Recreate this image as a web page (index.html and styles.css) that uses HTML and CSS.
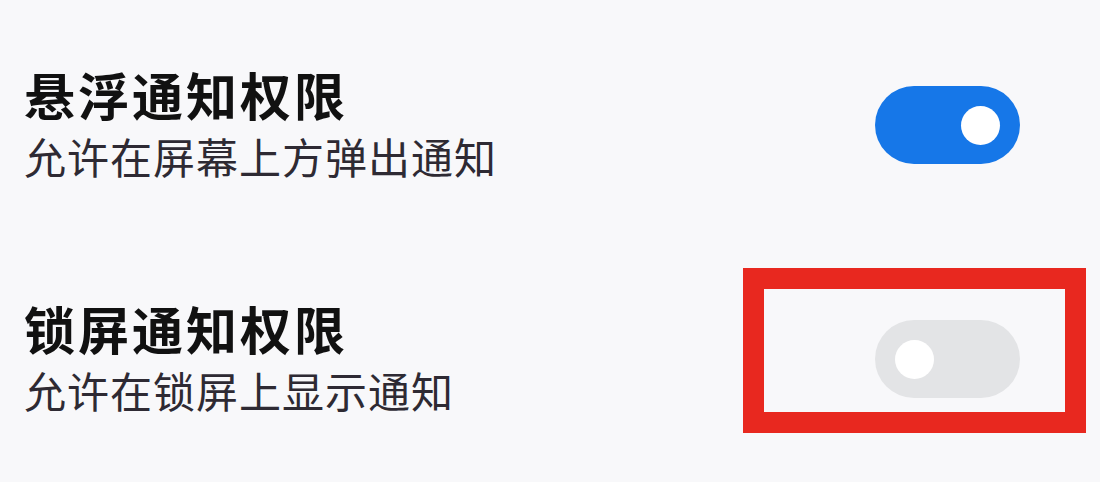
FILE: index.html
```html
<!DOCTYPE html>
<html lang="zh-CN">
<head>
    <meta charset="UTF-8">
    <meta name="viewport" content="width=device-width, initial-scale=1.0">
    <title>通知权限</title>
    <link rel="stylesheet" href="styles.css">
</head>
<body>
    <div class="settings">
        <div class="setting-row">
            <div class="setting-text">
                <div class="setting-title">悬浮通知权限</div>
                <div class="setting-desc">允许在屏幕上方弹出通知</div>
            </div>
            <div class="switch on"><span class="knob"></span></div>
        </div>
        <div class="setting-row">
            <div class="setting-text">
                <div class="setting-title">锁屏通知权限</div>
                <div class="setting-desc">允许在锁屏上显示通知</div>
            </div>
            <div class="switch-wrap">
                <div class="highlight"></div>
                <div class="switch off"><span class="knob"></span></div>
            </div>
        </div>
    </div>
</body>
</html>
```

FILE: styles.css
```css
body {
    margin: 0;
    background-color: #f8f8fa;
    font-family: "Noto Sans CJK SC", "Noto Sans", sans-serif;
    color: #111;
}

.settings {
    padding-top: 8px;
}

.setting-row {
    height: 234px;
    display: flex;
    align-items: center;
    justify-content: space-between;
    padding: 0 80px 0 24px;
}

.setting-text {
    margin-top: -4px;
}

.setting-title {
    font-size: 51px;
    font-weight: bold;
    letter-spacing: 3px;
    line-height: 1.2;
}

.setting-desc {
    margin-top: 6px;
    font-size: 42px;
    letter-spacing: 1px;
    line-height: 1.2;
    color: #2e2a33;
}

.switch {
    width: 145px;
    height: 78px;
    border-radius: 39px;
    display: flex;
    align-items: center;
    box-sizing: border-box;
    padding: 0 20px;
}

.switch .knob {
    width: 39px;
    height: 39px;
    border-radius: 50%;
    background-color: #fff;
}

.switch.on {
    background-color: #1677e8;
    justify-content: flex-end;
}

.switch.off {
    background-color: #e3e4e6;
    justify-content: flex-start;
}

.switch-wrap {
    position: relative;
}

/* red marker drawn around the second switch */
.highlight {
    position: absolute;
    left: -132px;
    top: -52px;
    width: 301px;
    height: 123px;
    border: 21px solid #e8281f;
}
```
